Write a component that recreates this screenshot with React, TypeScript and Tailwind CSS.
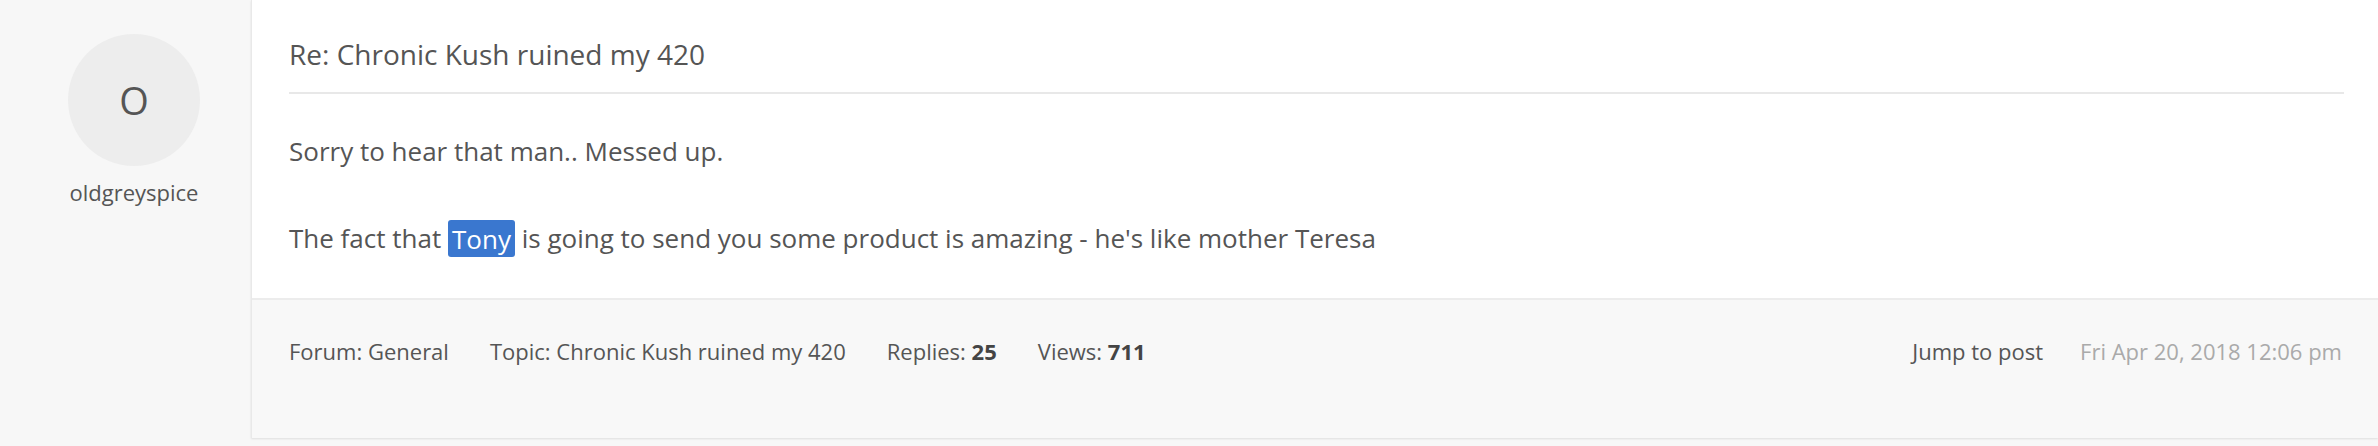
import React from "react";

const metaItems = [
  { label: "Forum:", value: "General", bold: false },
  { label: "Topic:", value: "Chronic Kush ruined my 420", bold: false },
  { label: "Replies:", value: "25", bold: true },
  { label: "Views:", value: "711", bold: true },
];

const App = () => {
  return (
    <div className="w-[2378px] h-[446px] overflow-hidden bg-[#f7f7f7] font-['Open_Sans',sans-serif] text-[#555]">
      <div className="flex items-start">
        {/* Author column */}
        <div className="w-[251px] shrink-0 pl-[17px] pt-[34px] flex flex-col items-center">
          <div className="w-[132px] h-[132px] rounded-full bg-[#ededed] flex items-center justify-center text-[38px] font-normal text-[#555]">
            O
          </div>
          <div className="mt-[11px] text-[22px] leading-[30px]">oldgreyspice</div>
        </div>

        {/* Post card */}
        <div className="flex-1 bg-white border-l border-[#e9e9e9] shadow-[0_1px_2px_rgba(0,0,0,0.1)]">
          <div className="pl-[37px] pr-[34px]">
            <h2 className="pt-[34px] pb-[18px] text-[28px] leading-[40px] font-normal border-b-2 border-[#e8e8e8]">
              Re: Chronic Kush ruined my 420
            </h2>
            <div className="pt-[36px] pb-[38px] text-[26px] leading-[43px]">
              <p className="mb-[44px]">Sorry to hear that man.. Messed up.</p>
              <p>
                The fact that{" "}
                <span className="bg-[#3a77cf] text-white rounded-[3px] px-[4px] py-[0.5px]">Tony</span>{" "}
                is going to send you some product is amazing - he's like mother Teresa
              </p>
            </div>
          </div>

          <div className="h-[140px] bg-[#f8f8f8] border-t-2 border-[#ececec] pl-[37px] pr-[36px] pt-[35px]">
            <div className="flex items-center justify-between text-[22px] leading-[32px]">
              <div className="flex items-center gap-[41px]">
                {metaItems.map((m) => (
                  <span key={m.label}>
                    {m.label}{" "}
                    <span className={m.bold ? "font-bold text-[#444]" : ""}>{m.value}</span>
                  </span>
                ))}
              </div>
              <div className="flex items-center gap-[37px]">
                <span>Jump to post</span>
                <span className="text-[#aaa]">Fri Apr 20, 2018 12:06 pm</span>
              </div>
            </div>
          </div>
        </div>
      </div>
    </div>
  );
};

export default App;
